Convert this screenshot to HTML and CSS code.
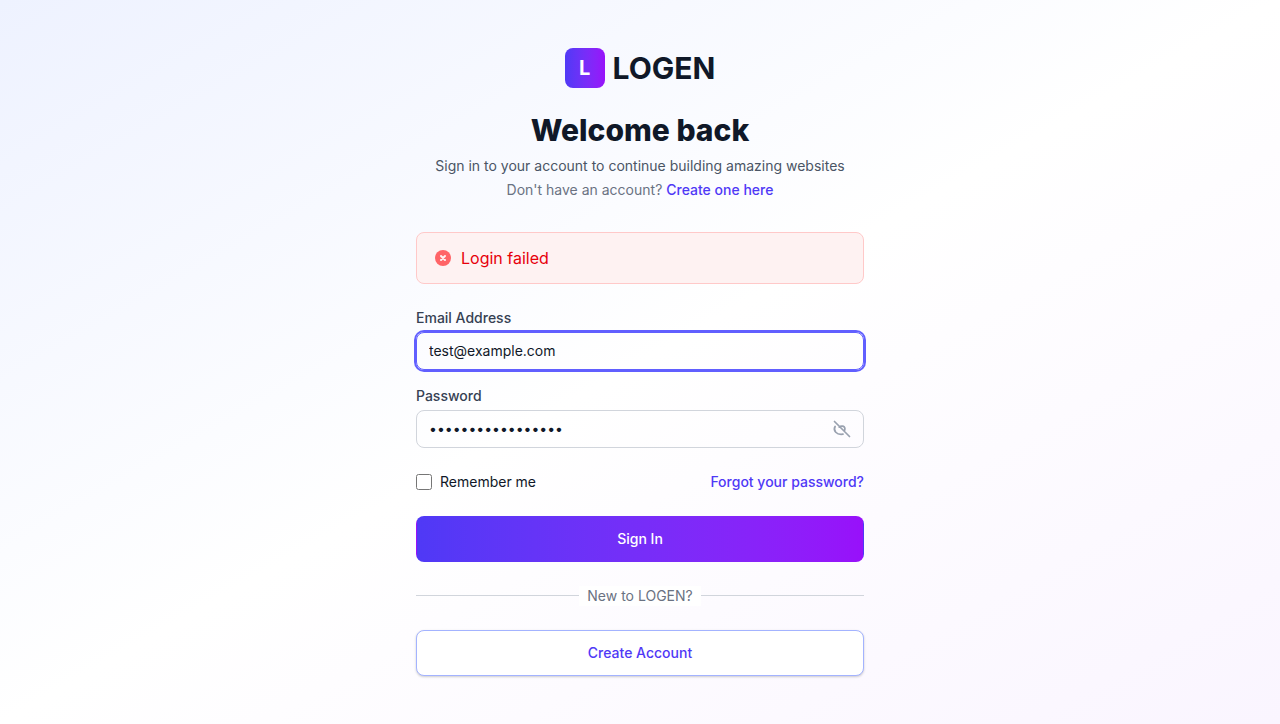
FILE: index.html
```html
<!DOCTYPE html>
<html lang="en">
<head>
<meta charset="utf-8">
<meta name="viewport" content="width=device-width, initial-scale=1">
<title>Sign in - LOGEN</title>
<link rel="stylesheet" href="styles.css">
</head>
<body>
<main class="login">
  <header class="intro">
    <div class="brand"><span class="brand-mark">L</span><span class="brand-name">LOGEN</span></div>
    <h1 class="title">Welcome back</h1>
    <p class="subtitle">Sign in to your account to continue building amazing websites</p>
    <p class="signup">Don't have an account? <a class="link" href="#register">Create one here</a></p>
  </header>
  <div class="alert" role="alert">
    <svg class="alert-icon" viewBox="0 0 16 16" aria-hidden="true"><circle cx="8" cy="8" r="8" fill="currentColor"/><path d="M6 6l4 4M10 6l-4 4" fill="none" stroke="#fef2f2" stroke-width="2" stroke-linecap="round"/></svg>
    <span>Login failed</span>
  </div>
  <form class="form">
    <div class="fields">
      <div class="field">
        <label class="label" for="email">Email Address</label>
        <input class="input input-active" id="email" type="email" value="test@example.com">
      </div>
      <div class="field">
        <label class="label" for="password">Password</label>
        <div class="password">
          <input class="input" id="password" type="password" value="wrongpassword1234">
          <button class="reveal" type="button" aria-label="Show password">
            <svg class="reveal-icon" viewBox="0 0 20 20" fill="none" stroke="currentColor" stroke-width="1.7" stroke-linecap="round" aria-hidden="true"><path d="M2.500 2.500l15 15M3.100 7.500C.8 11.500 4.500 16.200 11 15.200M7.300 8.200C8.500 6.600 12.600 6.500 12.900 9.500c.1 1-.1 1.700-.7 2.300"/></svg>
          </button>
        </div>
      </div>
    </div>
    <div class="options">
      <label class="remember" for="remember"><input class="checkbox" id="remember" type="checkbox">Remember me</label>
      <a class="link" href="#forgot">Forgot your password?</a>
    </div>
    <button class="button button-primary" type="submit">Sign In</button>
    <div class="divider"><span class="divider-text">New to LOGEN?</span></div>
    <button class="button button-outline" type="button">Create Account</button>
  </form>
</main>
</body>
</html>
```
FILE: styles.css
```css
*, *::before, *::after { box-sizing: border-box; }
body {
  margin: 0;
  min-height: 100vh;
  display: flex;
  align-items: center;
  justify-content: center;
  padding: 48px 32px;
  background: linear-gradient(to bottom right in oklab, #eef2ff, #ffffff, #faf5ff);
  color: #101828;
  font: 14px/20px Inter, sans-serif;
}
h1, p { margin: 0; }
button, input { font: inherit; color: inherit; }
.login { width: 100%; max-width: 448px; }
.intro { text-align: center; margin-bottom: 32px; }
.brand {
  display: flex;
  align-items: center;
  justify-content: center;
  gap: 8px;
  margin-bottom: 24px;
}
.brand-mark {
  display: flex;
  align-items: center;
  justify-content: center;
  width: 40px;
  height: 40px;
  border-radius: 8px;
  background: linear-gradient(to right in oklab, #4f39f6, #9810fa);
  color: #fff;
  font-size: 20px;
  font-weight: 700;
}
.brand-name { font-size: 30px; line-height: 36px; font-weight: 700; }
.title { font-size: 30px; line-height: 36px; font-weight: 800; }
.subtitle { margin-top: 8px; color: #4a5565; }
.signup { margin-top: 4px; color: #6a7282; }
.link { color: #4f39f6; font-weight: 500; text-decoration: none; }
.alert {
  display: flex;
  align-items: center;
  gap: 10px;
  padding: 13px 18px;
  margin-bottom: 24px;
  border: 1px solid #ffc9c9;
  border-radius: 8px;
  background: #fef2f2;
  color: #e7000b;
  font-size: 16px;
  line-height: 24px;
}
.alert-icon { width: 16px; height: 16px; color: #ff6467; }
.form { display: flex; flex-direction: column; gap: 24px; }
.fields { display: flex; flex-direction: column; gap: 16px; }
.field { display: flex; flex-direction: column; gap: 4px; }
.label { color: #364153; font-weight: 500; }
.input {
  display: block;
  width: 100%;
  padding: 8px 12px;
  border: 1px solid #d1d5dc;
  border-radius: 8px;
  background: transparent;
  outline: none;
}
.input-active { border-color: #615fff; box-shadow: 0 0 0 2px #615fff; }
.password { position: relative; }
.reveal {
  position: absolute;
  top: 0;
  right: 0;
  height: 100%;
  display: flex;
  align-items: center;
  padding: 0 12px;
  border: 0;
  background: none;
  color: #99a1af;
}
.reveal-icon { width: 20px; height: 20px; }
.options { display: flex; align-items: center; justify-content: space-between; }
.remember { display: flex; align-items: center; gap: 8px; }
.checkbox { width: 16px; height: 16px; margin: 0; }
.button {
  width: 100%;
  padding: 12px 16px;
  border: 1px solid transparent;
  border-radius: 8px;
  font-weight: 500;
}
.button-primary { background: linear-gradient(to right in oklab, #4f39f6, #9810fa); color: #fff; }
.button-outline {
  border-color: #a3b3ff;
  background: #fff;
  color: #4f39f6;
  box-shadow: 0 1px 3px rgba(0, 0, 0, 0.1), 0 1px 2px rgba(0, 0, 0, 0.1);
}
.divider { display: flex; align-items: center; color: #6a7282; }
.divider::before, .divider::after { content: ""; flex: 1; height: 2px; border-top: 1px solid #d1d5dc; }
.divider-text { padding: 0 8px; background: #fff; }
```
